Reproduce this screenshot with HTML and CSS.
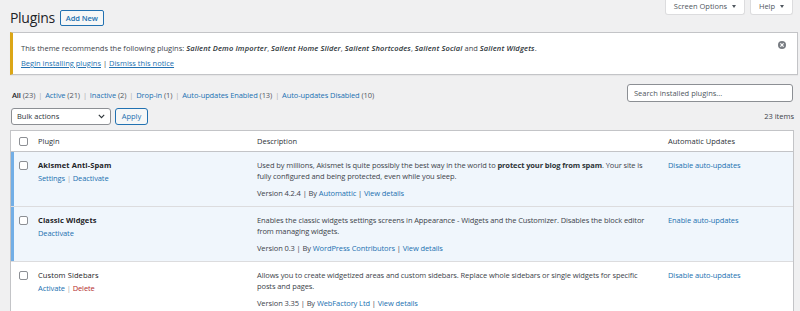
FILE: index.html
```html
<!DOCTYPE html>
<html lang="en">
<head>
<meta charset="utf-8">
<title>Plugins</title>
<link rel="stylesheet" href="styles.css">
</head>
<body>
<div class="wrap">
  <div class="top">
    <div class="title-row">
      <h1 class="page-title">Plugins</h1>
      <a class="add-new" href="#">Add New</a>
    </div>
    <div class="meta-links">
      <button class="meta-btn">Screen Options <span class="caret"></span></button>
      <button class="meta-btn">Help <span class="caret"></span></button>
    </div>
  </div>

  <div class="notice">
    <p class="notice-text">This theme recommends the following plugins: <em>Salient Demo Importer</em>, <em>Salient Home Slider</em>, <em>Salient Shortcodes</em>, <em>Salient Social</em> and <em>Salient Widgets</em>.</p>
    <p class="notice-links"><a href="#">Begin installing plugins</a> <span class="sep">|</span> <a href="#">Dismiss this notice</a></p>
    <button class="dismiss" aria-label="Dismiss">
      <svg width="8" height="8" viewBox="0 0 8 8"><circle cx="4" cy="4" r="4" fill="#787c82"/><path d="M2.4 2.4 5.6 5.6M5.6 2.4 2.4 5.6" stroke="#fff" stroke-width="1.2"/></svg>
    </button>
  </div>

  <div class="filter-row">
    <ul class="filters">
      <li class="current">All <span class="count">(23)</span></li>
      <li><span class="sep">|</span> <a href="#">Active</a> <span class="count">(21)</span></li>
      <li><span class="sep">|</span> <a href="#">Inactive</a> <span class="count">(2)</span></li>
      <li><span class="sep">|</span> <a href="#">Drop-in</a> <span class="count">(1)</span></li>
      <li><span class="sep">|</span> <a href="#">Auto-updates Enabled</a> <span class="count">(13)</span></li>
      <li><span class="sep">|</span> <a href="#">Auto-updates Disabled</a> <span class="count">(10)</span></li>
    </ul>
    <div class="search-box">Search installed plugins...</div>
  </div>

  <div class="tablenav">
    <div class="actions">
      <div class="select">Bulk actions
        <svg class="chev" width="7" height="5" viewBox="0 0 7 5"><path d="M0.8 0.8 3.5 3.6 6.2 0.8" fill="none" stroke="#2c3338" stroke-width="1.1"/></svg>
      </div>
      <button class="btn-apply">Apply</button>
    </div>
    <div class="items">23 items</div>
  </div>

  <table class="plugins">
    <thead>
      <tr>
        <th class="check"><span class="cb"></span></th>
        <th class="col-name">Plugin</th>
        <th class="col-desc">Description</th>
        <th class="col-auto">Automatic Updates</th>
      </tr>
    </thead>
    <tbody>
      <tr class="active">
        <th class="check"><span class="cb"></span></th>
        <td class="col-name">
          <div class="name">Akismet Anti-Spam</div>
          <div class="row-actions"><a href="#">Settings</a> <span class="sep">|</span> <a href="#">Deactivate</a></div>
        </td>
        <td class="col-desc">
          <div class="desc">Used by millions, Akismet is quite possibly the best way in the world to <strong>protect your blog from spam</strong>. Your site is fully configured and being protected, even while you sleep.</div>
          <div class="meta">Version 4.2.4 | By <a href="#">Automattic</a> | <a href="#">View details</a></div>
        </td>
        <td class="col-auto"><a href="#">Disable auto-updates</a></td>
      </tr>
      <tr class="active">
        <th class="check"><span class="cb"></span></th>
        <td class="col-name">
          <div class="name">Classic Widgets</div>
          <div class="row-actions"><a href="#">Deactivate</a></div>
        </td>
        <td class="col-desc">
          <div class="desc">Enables the classic widgets settings screens in Appearance - Widgets and the Customizer. Disables the block editor from managing widgets.</div>
          <div class="meta">Version 0.3 | By <a href="#">WordPress Contributors</a> | <a href="#">View details</a></div>
        </td>
        <td class="col-auto"><a href="#">Enable auto-updates</a></td>
      </tr>
      <tr class="inactive">
        <th class="check"><span class="cb"></span></th>
        <td class="col-name">
          <div class="name">Custom Sidebars</div>
          <div class="row-actions"><a href="#">Activate</a> <span class="sep">|</span> <a class="delete" href="#">Delete</a></div>
        </td>
        <td class="col-desc">
          <div class="desc">Allows you to create widgetized areas and custom sidebars. Replace whole sidebars or single widgets for specific posts and pages.</div>
          <div class="meta">Version 3.35 | By <a href="#">WebFactory Ltd</a> | <a href="#">View details</a></div>
        </td>
        <td class="col-auto"><a href="#">Disable auto-updates</a></td>
      </tr>
    </tbody>
  </table>
</div>
</body>
</html>
```

FILE: styles.css
```css
* { box-sizing: border-box; }

body {
  margin: 0;
  background: #f0f0f1;
  font-family: "Open Sans", "Noto Sans", sans-serif;
  font-size: 7.5px;
  line-height: 11px;
  letter-spacing: -0.1px;
  color: #3c434a;
  overflow: hidden;
}

a { color: #2271b1; text-decoration: none; }

.wrap { padding: 0 6px 0 10px; }

/* top */
.top {
  display: flex;
  justify-content: space-between;
  align-items: flex-start;
}
.title-row {
  margin-top: 10px;
  display: flex;
  align-items: center;
  gap: 5px;
}
.page-title {
  margin: 0;
  font-size: 14px;
  font-weight: 400;
  line-height: 16px;
  letter-spacing: -0.3px;
  color: #1d2327;
}
.add-new {
  display: block;
  height: 16px;
  line-height: 14px;
  padding: 0 5px;
  border: 1px solid #2271b1;
  border-radius: 2px;
  background: #f6f7f7;
  font-weight: 600;
  color: #2271b1;
}
.meta-links {
  display: flex;
  gap: 5px;
  margin-right: 1px;
}
.meta-btn {
  height: 15px;
  padding: 0 0 2px;
  border: 1px solid #dcdcde;
  border-top: none;
  border-radius: 0 0 3px 3px;
  background: #fff;
  font: inherit;
  letter-spacing: 0;
  color: #50575e;
  line-height: 11px;
  white-space: nowrap;
  display: flex;
  align-items: center;
  justify-content: center;
  gap: 5px;
}
.meta-btn:first-child { width: 80px; }
.meta-btn:last-child { width: 43px; }
.caret {
  width: 0;
  height: 0;
  border-left: 2.5px solid transparent;
  border-right: 2.5px solid transparent;
  border-top: 3.5px solid #50575e;
}

/* notice */
.notice {
  position: relative;
  margin: 6px -4px 0 0;
  padding: 10px 24px 5px 8px;
  background: #fff;
  border: 1px solid #c3c4c7;
  border-left: 3px solid #dba617;
  box-shadow: 0 1px 1px rgba(0,0,0,.04);
  color: #3c434a;
  letter-spacing: 0;
}
.notice p { margin: 0; line-height: 11px; }
.notice-text { margin-bottom: 4px !important; }
.notice em { font-style: italic; font-weight: 600; letter-spacing: 0.15px; color: #2c3338; }
.notice-links a { text-decoration: underline; }
.sep { color: #a7aaad; }
.notice-links .sep { color: #3c434a; }
.dismiss {
  position: absolute;
  top: 8px;
  right: 11px;
  width: 8px;
  height: 8px;
  padding: 0;
  border: 0;
  background: none;
  display: flex;
}

/* filters + search */
.filter-row {
  margin-top: 9px;
  display: flex;
  justify-content: space-between;
  align-items: flex-end;
}
.filters {
  margin: 0 0 1px 2px;
  padding: 0;
  list-style: none;
  display: flex;
  gap: 3px;
  color: #50575e;
}
.filters .current { color: #1d2327; font-weight: 600; }
.filters .current .count { font-weight: 400; color: #50575e; }
.filters .sep { margin-right: 1px; }
.search-box {
  width: 166px;
  height: 18px;
  margin-right: 1px;
  padding: 0 6px;
  border: 1px solid #8c8f94;
  border-radius: 3px;
  background: #fff;
  color: #50575e;
  line-height: 16px;
  letter-spacing: 0;
}

/* tablenav */
.tablenav {
  margin-top: 6px;
  display: flex;
  justify-content: space-between;
  align-items: center;
}
.actions { display: flex; gap: 4px; margin-left: 1px; }
.select {
  width: 100px;
  height: 17px;
  padding: 0 5px;
  border: 1px solid #8c8f94;
  border-radius: 3px;
  background: #fff;
  color: #2c3338;
  line-height: 15px;
  letter-spacing: 0;
  display: flex;
  justify-content: space-between;
  align-items: center;
}
.btn-apply {
  width: 33px;
  height: 17px;
  padding: 0;
  border: 1px solid #2271b1;
  border-radius: 3px;
  background: #f6f7f7;
  color: #2271b1;
  font: inherit;
  letter-spacing: 0;
  line-height: 15px;
}
.items { color: #3c434a; letter-spacing: 0; }

/* table */
.plugins {
  width: 784px;
  margin-top: 5px;
  border: 1px solid #c3c4c7;
  border-spacing: 0;
  background: #fff;
  table-layout: fixed;
}
.plugins thead th {
  height: 21px;
  padding: 0 0 0 6px;
  text-align: left;
  font-weight: 400;
  letter-spacing: 0;
  color: #2c3338;
  border-bottom: 1px solid #c3c4c7;
  vertical-align: middle;
}
.plugins th.check { width: 21px; padding: 0 0 0 8px; }
.plugins .col-name { width: 219px; }
.plugins .col-auto { width: 131px; }
.plugins tbody td,
.plugins tbody th {
  height: 55px;
  padding: 8px 8px 0 6px;
  vertical-align: top;
  text-align: left;
  border-top: 1px solid #dcdcde;
}
.plugins tbody tr:first-child td,
.plugins tbody tr:first-child th { border-top: none; height: 54px; }
.plugins tbody th.check { padding: 9px 0 0 8px; }
.plugins tr.active td,
.plugins tr.active th { background: #f0f6fc; }
.plugins tr.active th.check { box-shadow: inset 3px 0 0 #72aee6; }

.cb {
  display: block;
  width: 9px;
  height: 9px;
  border: 1px solid #8c8f94;
  border-radius: 2px;
  background: #fff;
}

.name { color: #1d2327; font-weight: 400; letter-spacing: 0.1px; }
tr.active .name { font-weight: 700; }
.row-actions { margin-top: 2px; }
.row-actions .delete { color: #b32d2e; }
.desc { color: #3c434a; }
.desc strong { font-weight: 700; color: #2c3338; }
.meta { margin-top: 6px; color: #3c434a; }
.col-auto a { display: block; }
```
